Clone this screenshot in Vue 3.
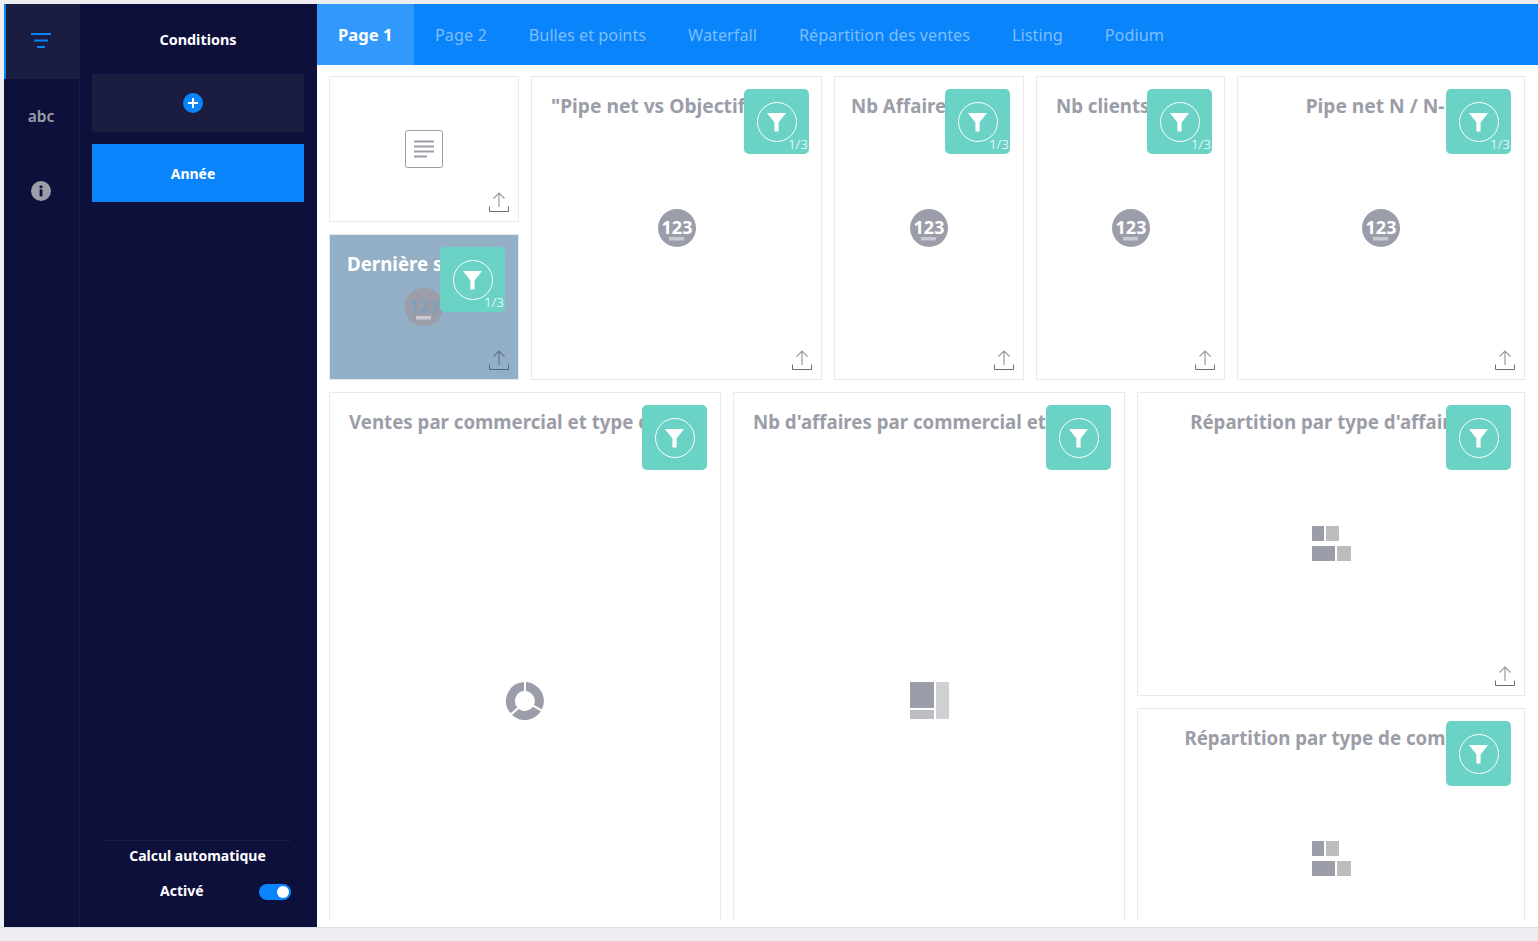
<script setup>
const tabs = ['Page 1', 'Page 2', 'Bulles et points', 'Waterfall', 'Répartition des ventes', 'Listing', 'Podium']

const topCards = [
  { id: 'text', icon: 'doc', upload: true },
  { id: 'pipe', title: '"Pipe net vs Objectif annuel"', icon: 'num', tall: true, upload: true, count: true, filter: true },
  { id: 'affaires', title: 'Nb Affaires signées', icon: 'num', tall: true, upload: true, count: true, filter: true },
  { id: 'clients', title: 'Nb clients signés', icon: 'num', tall: true, upload: true, count: true, filter: true },
  { id: 'pipen', title: 'Pipe net N / N-1', icon: 'num', tall: true, upload: true, count: true, filter: true },
  { id: 'last', title: 'Dernière semaine', icon: 'num', upload: true, count: true, filter: true, selected: true }
]

const bottomCards = [
  { id: 'ventes', title: "Ventes par commercial et type d'affaires", icon: 'donut', tall: true, filter: true },
  { id: 'nbaff', title: "Nb d'affaires par commercial et type d'affaires", icon: 'tree', tall: true, filter: true },
  { id: 'rep1', title: "Répartition par type d'affaires", icon: 'bars', upload: true, filter: true },
  { id: 'rep2', title: 'Répartition par type de compte', icon: 'bars', filter: true }
]
</script>

<template>
  <div class="shell">
    <nav class="rail">
      <div class="rail-item active">
        <svg width="20" height="15" viewBox="0 0 20 15"><path d="M0 1h20M3 7.5h14M6 14h8" stroke="#0984fb" stroke-width="2" /></svg>
      </div>
      <div class="rail-item abc">abc</div>
      <div class="rail-item info">
        <svg width="20" height="20" viewBox="0 0 20 20">
          <circle cx="10" cy="10" r="10" fill="#9b9da8" />
          <rect x="8.6" y="8.400" width="2.800" height="7" fill="#0e103c" />
          <rect x="8.6" y="4.600" width="2.800" height="2.600" fill="#0e103c" />
        </svg>
      </div>
    </nav>

    <aside class="panel">
      <h2 class="panel-title">Conditions</h2>
      <div class="add-box">
        <svg width="20" height="20" viewBox="0 0 20 20">
          <circle cx="10" cy="10" r="10" fill="#0984fb" />
          <path d="M10 5v10M5 10h10" stroke="#fff" stroke-width="2" />
        </svg>
      </div>
      <div class="condition">Année</div>
      <div class="auto">
        <div class="auto-title">Calcul automatique</div>
        <div class="auto-row">
          <span class="auto-label">Activé</span>
          <span class="toggle"><span class="knob"></span></span>
        </div>
      </div>
    </aside>

    <main class="main">
      <header class="tabs">
        <div v-for="(tab, i) in tabs" :key="tab" class="tab" :class="{ current: i === 0 }">{{ tab }}</div>
      </header>

      <div class="content">
        <section v-for="(group, g) in [topCards, bottomCards]" :key="g" class="grid" :class="g === 0 ? 'grid-top' : 'grid-bottom'">
          <article
            v-for="card in group"
            :key="card.id"
            class="card"
            :class="{ tall: card.tall, selected: card.selected, ['card-' + card.id]: true }"
          >
            <h3 v-if="card.title" class="card-title">{{ card.title }}</h3>

            <div class="card-icon">
              <svg v-if="card.icon === 'doc'" width="38" height="38" viewBox="0 0 38 38">
                <rect x="0.5" y="0.5" width="37" height="37" rx="2" fill="#fff" stroke="#9b9da8" />
                <path d="M9 11.5h20M9 16.5h20M9 21.5h20M9 26.5h13" stroke="#9b9da8" stroke-width="2" />
              </svg>
              <svg v-else-if="card.icon === 'num'" class="num" width="38" height="38" viewBox="0 0 38 38">
                <circle cx="19" cy="19" r="19" fill="#9b9da8" />
                <text x="19" y="25" text-anchor="middle" class="num-text">123</text>
                <rect x="11" y="28" width="15" height="3.5" fill="#c9cad0" />
              </svg>
              <svg v-else-if="card.icon === 'donut'" width="38" height="38" viewBox="0 0 38 38">
                <path d="M18 0.1A19 19 0 0 0 4.5 31.3L11.4 25.6A10 10 0 0 1 18 9.1Z" fill="#9b9da8" />
                <path d="M20 0.1A19 19 0 0 1 35.9 27.6L28 23A10 10 0 0 0 20 9.1Z" fill="#9b9da8" />
                <path d="M6 33A19 19 0 0 0 34.9 29.3L27 24.8A10 10 0 0 1 12.9 26.9Z" fill="#9b9da8" />
              </svg>
              <div v-else-if="card.icon === 'tree'" class="tree">
                <span class="tree-a"></span>
                <span class="tree-b"></span>
                <span class="tree-c"></span>
              </div>
              <div v-else class="bars">
                <div class="bars-row">
                  <span class="bar-dark" style="width: 12px"></span>
                  <span class="bar-light" style="width: 13px"></span>
                </div>
                <div class="bars-row">
                  <span class="bar-dark" style="width: 23px"></span>
                  <span class="bar-light" style="width: 14px"></span>
                </div>
              </div>
            </div>

            <div v-if="card.filter" class="filter">
              <span class="filter-ring">
                <svg width="20" height="20" viewBox="0 0 20 20"><path d="M0 1h19L11.600 10.500V19.500H7.400V10.500Z" fill="#fff" /></svg>
              </span>
              <span v-if="card.count" class="filter-count">1/3</span>
            </div>

            <svg v-if="card.upload" class="upload" width="22" height="22" viewBox="0 0 22 22">
              <path class="upload-arrow" d="M11 16V2M5.5 7.5L11 2l5.500 5.500" fill="none" stroke-width="1.200" />
              <path class="upload-tray" d="M1.500 15.500v5h19v-5" fill="none" stroke-width="1" />
            </svg>
          </article>
        </section>
      </div>
    </main>
  </div>
</template>

<style>
html, body {
  height: 100%;
  margin: 0;
  background: #edeef2;
  overflow: hidden;
}
</style>

<style scoped>
.shell {
  display: flex;
  height: 923px;
  padding: 4px 0 0 4px;
  border-bottom: 1px solid #dfe0e6;
  font-family: "Noto Sans", "Open Sans", sans-serif;
  box-sizing: content-box;
}

.rail {
  width: 75px;
  flex: none;
  background: #0e103c;
  border-right: 1px solid #1a1d40;
}

.rail-item {
  height: 75px;
  display: flex;
  align-items: center;
  justify-content: center;
  box-sizing: border-box;
  padding-right: 1px;
}

.rail-item.active {
  background: #1a1d40;
  border-left: 2px solid #0984fb;
  padding: 0 3px 3px 0;
}

.rail-item.abc {
  color: #9b9da8;
  font-size: 15.5px;
  font-weight: 600;
  padding-bottom: 1px;
}

.rail-item.info {
  padding-bottom: 2px;
}

.panel {
  width: 237px;
  flex: none;
  background: #0e103c;
  display: flex;
  flex-direction: column;
  padding: 0 13px 0 12px;
  box-sizing: border-box;
  color: #fff;
}

.panel-title {
  margin: 0;
  height: 70px;
  line-height: 72px;
  text-align: center;
  font-size: 14.4px;
  font-weight: 700;
}

.add-box {
  height: 58px;
  background: #1a1d40;
  display: flex;
  align-items: center;
  justify-content: center;
  padding-right: 10px;
}

.condition {
  margin-top: 12px;
  height: 58px;
  line-height: 59px;
  background: #0984fb;
  text-align: center;
  font-size: 14px;
  font-weight: 700;
  padding-right: 10px;
}

.auto {
  margin: auto 13px 27px 12px;
  border-top: 1px solid #1a1d40;
  font-size: 14px;
  font-weight: 700;
}

.auto-title {
  margin-top: 5px;
  line-height: 20px;
  text-align: center;
}

.auto-row {
  display: flex;
  align-items: center;
  justify-content: space-between;
  margin-top: 18px;
  padding-left: 56px;
}

.auto-label {
  margin-top: -3px;
}

.toggle {
  width: 32px;
  height: 16px;
  border-radius: 8px;
  background: #0984fb;
  display: flex;
  align-items: center;
  justify-content: flex-end;
  padding-right: 2px;
  box-sizing: border-box;
}

.knob {
  width: 12px;
  height: 12px;
  border-radius: 50%;
  background: #fff;
}

.main {
  flex: 1;
  min-width: 0;
  background: #fff;
  display: flex;
  flex-direction: column;
}

.tabs {
  height: 61px;
  flex: none;
  background: #0984fb;
  display: flex;
}

.tab {
  padding: 0 21px;
  line-height: 62px;
  font-size: 16.3px;
  color: #7fbefb;
}

.tab.current {
  background: #3198fc;
  color: #fff;
  font-weight: 700;
  font-size: 16.6px;
  width: 97px;
  box-sizing: border-box;
  white-space: nowrap;
}

.content {
  margin: 11px 13px 6px 12px;
  flex: 1;
  min-height: 0;
  overflow: hidden;
  display: flex;
  flex-direction: column;
  gap: 12px;
}

.grid {
  display: grid;
  gap: 12px;
  flex: none;
}

.grid-top {
  grid-template-columns: 190px 291px 190px 189px 288px;
  grid-template-rows: 146px 146px;
}

.grid-bottom {
  grid-template-columns: 392px 392px 388px;
  grid-template-rows: 304px 301px;
}

.card {
  position: relative;
  border: 1px solid #e9eaec;
  box-sizing: border-box;
  background: #fff;
  overflow: hidden;
  display: flex;
  align-items: center;
  justify-content: center;
}

.card.tall {
  grid-row: span 2;
}

.card-last {
  grid-column: 1;
  grid-row: 2;
}

.card.selected {
  background: #93afc6;
}

.card-title {
  position: absolute;
  top: 17px;
  left: 19px;
  right: 20px;
  margin: 0;
  overflow: hidden;
  white-space: nowrap;
  text-align: center;
  font-size: 18.7px;
  line-height: 24px;
  font-weight: 700;
  color: #9b9da8;
}

.card-pipe .card-title,
.card-pipen .card-title {
  font-size: 19.2px;
}

.card-affaires .card-title {
  left: 16px;
}

.selected .card-title {
  left: 17px;
  color: #fff;
}

.card-icon {
  display: flex;
}

.card-rep1 .card-icon {
  margin-top: -2px;
}

.card-icon svg {
  display: block;
}

.num-text {
  font-size: 18px;
  font-weight: 700;
  fill: #fff;
}

.selected .num-text {
  fill: #7f9fbb;
}

.tree {
  display: grid;
  grid-template-columns: 24px 13px;
  grid-template-rows: 26px 9px;
  gap: 2px;
}

.tree-a {
  background: #9b9da8;
}

.tree-b {
  background: #bcbdc5;
  grid-row: 2;
}

.tree-c {
  background: #cfd0d4;
  grid-row: 1 / span 2;
  grid-column: 2;
}

.bars {
  display: flex;
  flex-direction: column;
  gap: 5px;
  width: 39px;
}

.bars-row {
  display: flex;
  gap: 2px;
  height: 15px;
}

.bar-dark {
  background: #9b9da8;
}

.bar-light {
  background: #bdbdbd;
}

.filter {
  position: absolute;
  top: 12px;
  right: 13px;
  width: 65px;
  height: 65px;
  border-radius: 5px;
  background: #6bd2c6;
  display: flex;
  align-items: center;
  justify-content: center;
}

.card-pipe .filter,
.card-clients .filter {
  right: 12px;
}

.filter-ring {
  width: 40px;
  height: 40px;
  border: 1.500px solid #fff;
  border-radius: 50%;
  box-sizing: border-box;
  display: flex;
  align-items: center;
  justify-content: center;
  padding-top: 1px;
}

.filter-count {
  position: absolute;
  right: 1px;
  bottom: 2px;
  font-size: 13.5px;
  line-height: 16px;
  font-weight: 300;
  color: #fff;
}

.upload {
  position: absolute;
  right: 8px;
  bottom: 8px;
}

.upload-arrow {
  stroke: #9a9a9a;
}

.upload-tray {
  stroke: #6d6d6d;
}

.selected .upload-arrow {
  stroke: #66788a;
}

.selected .upload-tray {
  stroke: #55677a;
}
</style>
